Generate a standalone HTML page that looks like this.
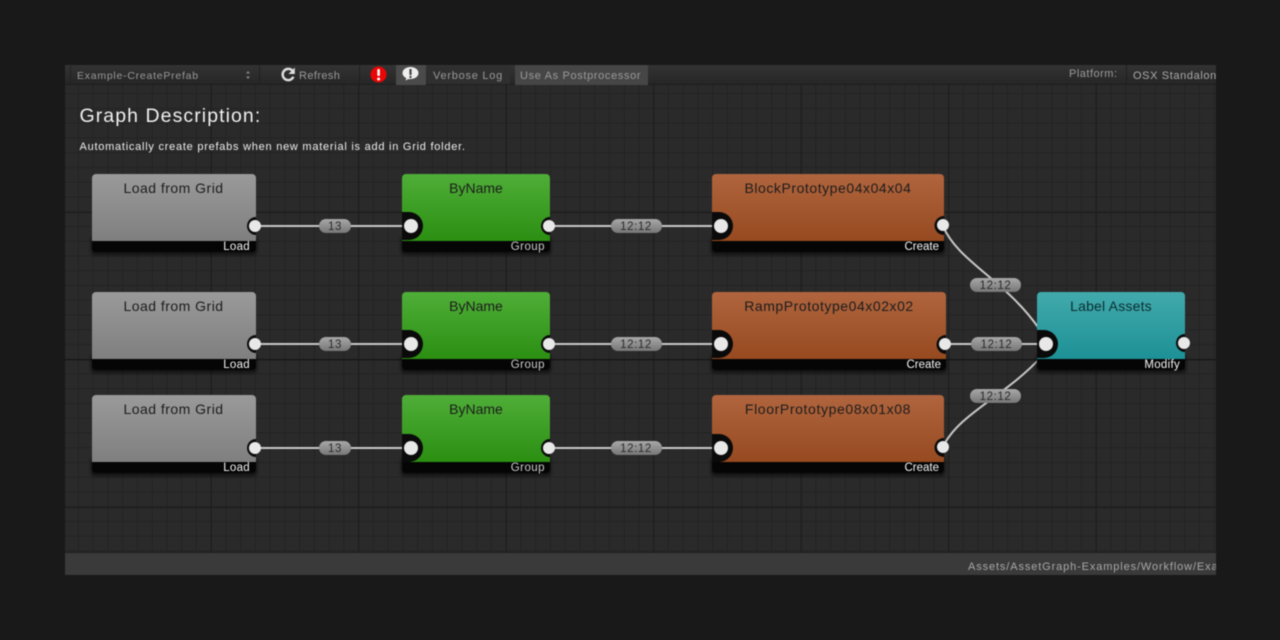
<!DOCTYPE html>
<html><head><meta charset="utf-8"><style>
html,body{margin:0;padding:0;background:#191919;width:1280px;height:640px;overflow:hidden}
body>svg{display:block;filter:blur(.45px)}
text{font-family:"Liberation Sans",sans-serif}
.t{font-size:14px;fill:#1c1c1c;text-anchor:middle;letter-spacing:.55px}
.f{font-size:11.5px;fill:#f4f4f4;text-anchor:end;letter-spacing:.3px}
.p{font-size:11.5px;fill:#2a2a2a;text-anchor:middle;letter-spacing:.6px}
.b{font-size:11px;fill:#999;letter-spacing:.7px}
.e{stroke:#c8c8c8;stroke-width:2;fill:none}
</style></head><body>
<svg width="1280" height="640" viewBox="0 0 1280 640" xmlns="http://www.w3.org/2000/svg">
<defs>
<pattern id="g1" x="63.2" y="63.7" width="14.75" height="14.75" patternUnits="userSpaceOnUse"><path d="M.5 0V14.75M0 .5H14.75" stroke="#232323" stroke-width="1" fill="none"/></pattern>
<pattern id="g2" x="63.2" y="64.5" width="147.5" height="147.5" patternUnits="userSpaceOnUse"><path d="M.5 0V147.5M0 .5H147.5" stroke="#1c1c1c" stroke-width="1" fill="none"/></pattern>
<linearGradient id="gy" x1="0" y1="0" x2="0" y2="1"><stop offset="0" stop-color="#9a9a9a"/><stop offset="1" stop-color="#7f7f7f"/></linearGradient>
<linearGradient id="gr" x1="0" y1="0" x2="0" y2="1"><stop offset="0" stop-color="#4fae38"/><stop offset="1" stop-color="#2b8f12"/></linearGradient>
<linearGradient id="or" x1="0" y1="0" x2="0" y2="1"><stop offset="0" stop-color="#b0653e"/><stop offset="1" stop-color="#974a20"/></linearGradient>
<linearGradient id="te" x1="0" y1="0" x2="0" y2="1"><stop offset="0" stop-color="#42aaac"/><stop offset="1" stop-color="#1d9196"/></linearGradient>
<linearGradient id="pl" x1="0" y1="0" x2="0" y2="1"><stop offset="0" stop-color="#a8a8a8"/><stop offset="1" stop-color="#777"/></linearGradient>
<linearGradient id="tb" x1="0" y1="0" x2="0" y2="1"><stop offset="0" stop-color="#333"/><stop offset="1" stop-color="#262626"/></linearGradient>
<filter id="sh" x="-10%" y="-10%" width="120%" height="130%"><feGaussianBlur stdDeviation="1.5"/></filter>
</defs>

<!-- canvas -->
<rect x="65" y="65" width="1151" height="510" fill="#2a2a2a"/>
<rect x="65" y="65" width="1151" height="510" fill="url(#g1)"/>
<rect x="65" y="65" width="1151" height="510" fill="url(#g2)"/>
<rect x="65" y="359" width="1151" height="1" fill="#181818"/>

<!-- toolbar -->
<rect x="65" y="65" width="1151" height="19" fill="url(#tb)"/>
<rect x="65" y="84" width="1151" height="1" fill="#1e1e1e"/>
<rect x="70" y="66" width="1" height="18" fill="#222"/>
<rect x="259" y="66" width="1" height="18" fill="#1f1f1f"/>
<rect x="359" y="66" width="1" height="18" fill="#1f1f1f"/>
<text x="77" y="79" class="b" style="letter-spacing:.75px;font-size:10.5px">Example-CreatePrefab</text>
<path d="M246 73.5l2-2.5 2 2.5zM246 76.5l2 2.5 2-2.5z" fill="#888"/>
<path d="M292.800 71.200a5.600 5.600 0 1 0 .6 5.600" fill="none" stroke="#ddd" stroke-width="2.500"/>
<path d="M294.800 67.500v6.500h-6.300z" fill="#ddd"/>
<text x="299" y="79" class="b" style="letter-spacing:.4px">Refresh</text>
<circle cx="378.5" cy="74.5" r="8" fill="#e80606"/>
<rect x="377.3" y="69" width="2.6" height="7" fill="#fff" rx="1"/><circle cx="378.6" cy="79" r="1.5" fill="#fff"/>
<rect x="396" y="65" width="30" height="20" fill="#4a4a4a"/>
<path d="M410.5 67c4.5 0 8 2.500 8 6s-3.500 6-8 6l-2.500 .2-2.500 1.300 .8-2.500c-2.300-1-3.800-2.800-3.800-5 0-3.500 3.500-6 8-6z" fill="#eee"/>
<rect x="409.400" y="69" width="2.200" height="6" fill="#444"/><circle cx="410.500" cy="77" r="1.200" fill="#444"/>
<rect x="427" y="66" width="83" height="18" fill="#2f2f2f"/>
<text x="433" y="79" class="b" style="letter-spacing:.75px">Verbose Log</text>
<rect x="515" y="65" width="133" height="20" fill="#464646"/>
<text x="520" y="79" class="b" style="letter-spacing:.65px">Use As Postprocessor</text>
<text x="1069" y="77" class="b" style="fill:#9a9a9a;letter-spacing:.5px">Platform:</text>
<rect x="1126" y="65" width="1" height="19" fill="#1f1f1f"/>
<text x="1133" y="79" class="b" style="fill:#aaa;letter-spacing:.62px">OSX Standalone</text>

<!-- description -->
<text x="79.500" y="122" style="font-size:19.500px;fill:#f0f0f0;letter-spacing:1.07px">Graph Description:</text>
<text x="79.500" y="150" style="font-size:11px;fill:#efefef;letter-spacing:.75px">Automatically create prefabs when new material is add in Grid folder.</text>

<!-- edges -->
<path class="e" d="M255 226H411M550 226H721M255 344H411M550 344H721M255 448H411M550 448H721M945 344H1046"/>
<path class="e" d="M943 226C958 262 1006 280 1040 330"/>
<path class="e" d="M943 447C958 414 1006 396 1042 356"/>

<!-- node shadows -->
<g fill="#000" opacity=".55" filter="url(#sh)">
<rect x="91" y="236" width="166" height="19" rx="4"/><rect x="401" y="236" width="150" height="19" rx="4"/><rect x="711" y="236" width="234" height="19" rx="4"/>
<rect x="91" y="354" width="166" height="19" rx="4"/><rect x="401" y="354" width="150" height="19" rx="4"/><rect x="711" y="354" width="236" height="19" rx="4"/>
<rect x="91" y="457" width="166" height="19" rx="4"/><rect x="401" y="457" width="150" height="19" rx="4"/><rect x="711" y="457" width="234" height="19" rx="4"/>
<rect x="1036" y="354" width="150" height="19" rx="4"/>
</g>

<!-- row 1 -->
<path d="M92 236H256V248a4 4 0 0 1-4 4H96a4 4 0 0 1-4-4Z" fill="#050505"/>
<path d="M96 174H252a4 4 0 0 1 4 4V241H92V178a4 4 0 0 1 4-4Z" fill="url(#gy)"/>
<path d="M402 236H550V248a4 4 0 0 1-4 4H406a4 4 0 0 1-4-4Z" fill="#050505"/>
<path d="M406 174H546a4 4 0 0 1 4 4V241H402V178a4 4 0 0 1 4-4Z" fill="url(#gr)"/>
<path d="M712 236H944V248a4 4 0 0 1-4 4H716a4 4 0 0 1-4-4Z" fill="#050505"/>
<path d="M716 174H940a4 4 0 0 1 4 4V241H712V178a4 4 0 0 1 4-4Z" fill="url(#or)"/>

<!-- row 2 -->
<path d="M92 354H256V366a4 4 0 0 1-4 4H96a4 4 0 0 1-4-4Z" fill="#050505"/>
<path d="M96 292H252a4 4 0 0 1 4 4V359H92V296a4 4 0 0 1 4-4Z" fill="url(#gy)"/>
<path d="M402 354H550V366a4 4 0 0 1-4 4H406a4 4 0 0 1-4-4Z" fill="#050505"/>
<path d="M406 292H546a4 4 0 0 1 4 4V359H402V296a4 4 0 0 1 4-4Z" fill="url(#gr)"/>
<path d="M712 354H946V366a4 4 0 0 1-4 4H716a4 4 0 0 1-4-4Z" fill="#050505"/>
<path d="M716 292H942a4 4 0 0 1 4 4V359H712V296a4 4 0 0 1 4-4Z" fill="url(#or)"/>

<!-- row 3 -->
<path d="M92 457H256V469a4 4 0 0 1-4 4H96a4 4 0 0 1-4-4Z" fill="#050505"/>
<path d="M96 395H252a4 4 0 0 1 4 4V462H92V399a4 4 0 0 1 4-4Z" fill="url(#gy)"/>
<path d="M402 457H550V469a4 4 0 0 1-4 4H406a4 4 0 0 1-4-4Z" fill="#050505"/>
<path d="M406 395H546a4 4 0 0 1 4 4V462H402V399a4 4 0 0 1 4-4Z" fill="url(#gr)"/>
<path d="M712 457H944V469a4 4 0 0 1-4 4H716a4 4 0 0 1-4-4Z" fill="#050505"/>
<path d="M716 395H940a4 4 0 0 1 4 4V462H712V399a4 4 0 0 1 4-4Z" fill="url(#or)"/>

<!-- teal -->
<path d="M1037 354H1185V366a4 4 0 0 1-4 4H1041a4 4 0 0 1-4-4Z" fill="#050505"/>
<path d="M1041 292H1181a4 4 0 0 1 4 4V359H1037V296a4 4 0 0 1 4-4Z" fill="url(#te)"/>

<!-- titles -->
<text x="173.500" y="193" class="t" style="letter-spacing:.48px">Load from Grid</text>
<text x="476" y="193" class="t" style="letter-spacing:0">ByName</text>
<text x="828" y="193" class="t">BlockPrototype04x04x04</text>
<text x="173.500" y="311" class="t" style="letter-spacing:.48px">Load from Grid</text>
<text x="476" y="311" class="t" style="letter-spacing:0">ByName</text>
<text x="829" y="311" class="t">RampPrototype04x02x02</text>
<text x="173.500" y="414" class="t" style="letter-spacing:.48px">Load from Grid</text>
<text x="476" y="414" class="t" style="letter-spacing:0">ByName</text>
<text x="828" y="414" class="t" style="letter-spacing:.62px">FloorPrototype08x01x08</text>
<text x="1111" y="311" class="t" style="fill:#0a2d30;letter-spacing:.2px">Label Assets</text>

<!-- footers -->
<text x="250" y="250" class="f">Load</text><text x="545" y="250" class="f" style="fill:#ccc;letter-spacing:.45px">Group</text><text x="939" y="250" class="f" style="letter-spacing:0">Create</text>
<text x="250" y="368" class="f">Load</text><text x="545" y="368" class="f" style="fill:#ccc;letter-spacing:.45px">Group</text><text x="941" y="368" class="f" style="letter-spacing:0">Create</text>
<text x="250" y="471" class="f">Load</text><text x="545" y="471" class="f" style="fill:#ccc;letter-spacing:.45px">Group</text><text x="939" y="471" class="f" style="letter-spacing:0">Create</text>
<text x="1180" y="368" class="f">Modify</text>

<!-- output ports -->
<g fill="#0a0a0a">
<path d="M256 217a9 9 0 0 0 0 18Z"/><path d="M550 217a9 9 0 0 0 0 18Z"/><path d="M944 216a9.500 9.500 0 0 0 0 19Z"/>
<path d="M256 335a9 9 0 0 0 0 18Z"/><path d="M550 335a9 9 0 0 0 0 18Z"/><path d="M946 335a9.500 9.500 0 0 0 0 19Z"/>
<path d="M256 439a9 9 0 0 0 0 18Z"/><path d="M550 439a9 9 0 0 0 0 18Z"/><path d="M944 438a9.500 9.500 0 0 0 0 19Z"/>
<path d="M1185 334a9 9 0 0 0 0 18Z"/>
<!-- input ports -->
<path d="M402 212h7a14 14 0 0 1 0 28h-7Z"/><path d="M712 212h7a14 14 0 0 1 0 28h-7Z"/>
<path d="M402 330h7a14 14 0 0 1 0 28h-7Z"/><path d="M712 330h7a14 14 0 0 1 0 28h-7Z"/>
<path d="M402 434h7a14 14 0 0 1 0 28h-7Z"/><path d="M712 434h7a14 14 0 0 1 0 28h-7Z"/>
<path d="M1037 330h7a14 14 0 0 1 0 28h-7Z"/>
</g>
<g fill="#e8e8e8">
<circle cx="255" cy="226" r="6"/><circle cx="549" cy="226" r="6"/><circle cx="943" cy="225" r="6"/>
<circle cx="255" cy="344" r="6"/><circle cx="549" cy="344" r="6"/><circle cx="945" cy="344" r="6"/>
<circle cx="255" cy="448" r="6"/><circle cx="549" cy="448" r="6"/><circle cx="943" cy="447" r="6"/>
<circle cx="1184" cy="343" r="6"/>
<circle cx="411" cy="226" r="7"/><circle cx="721" cy="226" r="7"/>
<circle cx="411" cy="344" r="7"/><circle cx="721" cy="344" r="7"/>
<circle cx="411" cy="448" r="7"/><circle cx="721" cy="448" r="7"/>
<circle cx="1046" cy="344" r="7"/>
</g>

<!-- pills -->
<g fill="url(#pl)">
<rect x="319" y="219" width="32" height="14" rx="7"/><rect x="611" y="219" width="51" height="14" rx="7"/>
<rect x="319" y="337" width="32" height="14" rx="7"/><rect x="611" y="337" width="51" height="14" rx="7"/>
<rect x="319" y="441" width="32" height="14" rx="7"/><rect x="611" y="441" width="51" height="14" rx="7"/>
<rect x="970" y="278" width="51" height="14" rx="7"/><rect x="971" y="337" width="51" height="14" rx="7"/><rect x="970" y="389" width="51" height="14" rx="7"/>
</g>
<text x="335" y="230" class="p">13</text><text x="636" y="230" class="p">12:12</text>
<text x="335" y="348" class="p">13</text><text x="636" y="348" class="p">12:12</text>
<text x="335" y="452" class="p">13</text><text x="636" y="452" class="p">12:12</text>
<text x="995.500" y="289" class="p">12:12</text><text x="996.500" y="348" class="p">12:12</text><text x="995.500" y="400" class="p">12:12</text>

<!-- status bar -->
<rect x="65" y="552" width="1151" height="1" fill="#1f1f1f"/>
<rect x="65" y="553" width="1151" height="22" fill="#3a3a3a"/>
<text x="968" y="570" class="b" style="fill:#a8a8a8;letter-spacing:.88px">Assets/AssetGraph-Examples/Workflow/Example</text>

<!-- outside-window cover -->
<rect x="1216" y="60" width="64" height="520" fill="#191919"/>
</svg>
</body></html>
